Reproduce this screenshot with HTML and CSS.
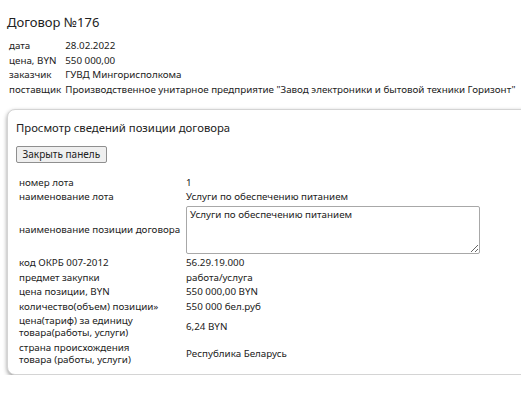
FILE: index.html
```html
<!DOCTYPE html>
<html lang="ru">
<head>
<meta charset="utf-8">
<title>Договор №176</title>
<link rel="stylesheet" href="styles.css">
</head>
<body>
<div class="page">
  <h1 class="title">Договор №176</h1>
  <table class="info">
    <tr><td>дата</td><td>28.02.2022</td></tr>
    <tr><td>цена, BYN</td><td>550 000,00</td></tr>
    <tr><td>заказчик</td><td>ГУВД Мингорисполкома</td></tr>
    <tr><td>поставщик</td><td>Производственное унитарное предприятие "Завод электроники и бытовой техники Горизонт"</td></tr>
  </table>
  <div class="panel">
    <h2 class="panel-title">Просмотр сведений позиции договора</h2>
    <button class="btn" type="button">Закрыть панель</button>
    <table class="details">
      <tr><td class="lbl">номер лота</td><td>1</td></tr>
      <tr><td class="lbl">наименование лота</td><td>Услуги по обеспечению питанием</td></tr>
      <tr><td class="lbl">наименование позиции договора</td><td><textarea class="ta">Услуги по обеспечению питанием</textarea></td></tr>
      <tr><td class="lbl">код ОКРБ 007-2012</td><td>56.29.19.000</td></tr>
      <tr><td class="lbl">предмет закупки</td><td>работа/услуга</td></tr>
      <tr><td class="lbl">цена позиции, BYN</td><td>550 000,00 BYN</td></tr>
      <tr><td class="lbl">количество(объем) позиции»</td><td>550 000 бел.руб</td></tr>
      <tr><td class="lbl">цена(тариф) за единицу<br>товара(работы, услуги)</td><td>6,24 BYN</td></tr>
      <tr><td class="lbl">страна происхождения<br>товара (работы, услуги)</td><td>Республика Беларусь</td></tr>
    </table>
  </div>
</div>
</body>
</html>
```
FILE: styles.css
```css
html, body {
  margin: 0;
  background: #ffffff;
  overflow-x: hidden;
}
body {
  font-family: "Noto Sans", Tahoma, sans-serif;
  font-size: 9.8px;
  color: #222;
}
.page {
  padding: 8px 0 0 6px;
}
.title {
  font-size: 13px;
  font-weight: normal;
  margin: 6px 0 8px 1px;
  line-height: 17px;
}
.info {
  border-collapse: separate;
  border-spacing: 2px 0;
}
.info td {
  padding: 1.25px 1px;
  line-height: 12px;
  vertical-align: middle;
  white-space: nowrap;
}
.panel {
  margin-top: 12px;
  margin-left: 1px;
  margin-right: -20px;
  border: 1px solid #d4d4d4;
  border-radius: 8px;
  box-shadow: 0 2px 4px rgba(0, 0, 0, 0.4);
  padding: 10px 10px 7px 8px;
  background: #fff;
}
.panel-title {
  font-size: 11.3px;
  font-weight: normal;
  margin: 0 0 9.5px 0;
  line-height: 16px;
}
.btn {
  display: block;
  font-family: "Noto Sans", Tahoma, sans-serif;
  font-size: 10px;
  line-height: 15px;
  color: #222;
  background: #efefef;
  border: 1px solid #8f8f8f;
  border-radius: 2px;
  padding: 0 5.5px;
  margin: 0 0 13px 0;
}
.details {
  border-collapse: separate;
  border-spacing: 2px 0;
}
.details td {
  padding: 1.25px 1px;
  line-height: 12px;
  vertical-align: middle;
  white-space: nowrap;
}
.details .lbl {
  width: 163px;
}
.ta {
  display: block;
  box-sizing: border-box;
  width: 294px;
  height: 48px;
  font-family: "Noto Sans", Tahoma, sans-serif;
  font-size: 9.8px;
  line-height: 12px;
  color: #222;
  border: 1px solid #a8a8a8;
  border-radius: 2px;
  padding: 2px 3px;
  margin: 0.5px 0;
  resize: vertical;
}
```
